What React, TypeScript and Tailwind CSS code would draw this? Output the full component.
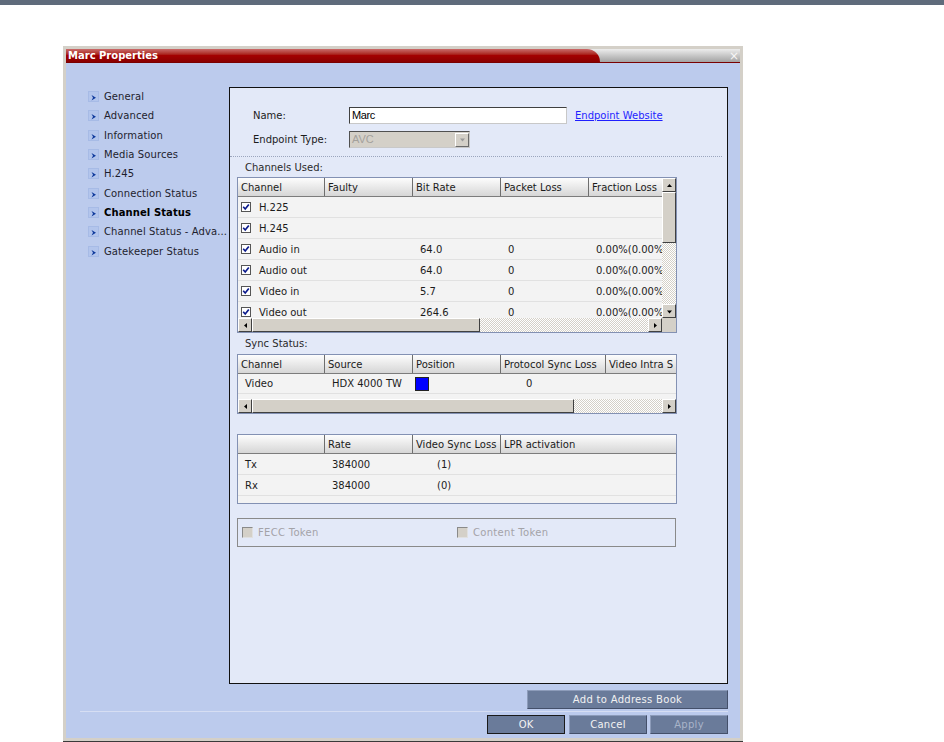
import React from "react";

type Dir = "up" | "down" | "left" | "right";

const arrows: Record<Dir, string> = {
  up: "M3.5 2 L6 5 L1 5Z",
  down: "M1 2.5 L6 2.5 L3.5 5.5Z",
  left: "M5 1 L5 6 L2 3.5Z",
  right: "M2 1 L2 6 L5 3.5Z",
};

function ScrollBtn({ dir }: { dir: Dir }) {
  return (
    <div className="flex h-[14px] w-[14px] shrink-0 items-center justify-center border border-t-white border-l-white border-r-[#404040] border-b-[#404040] bg-[#d4d0c8]">
      <svg width="7" height="7" viewBox="0 0 7 7">
        <path d={arrows[dir]} fill="#000" />
      </svg>
    </div>
  );
}

function Thumb({ className }: { className: string }) {
  return (
    <div
      className={`shrink-0 border border-t-white border-l-white border-r-[#404040] border-b-[#404040] bg-[#d4d0c8] ${className}`}
    />
  );
}

function Track({ className }: { className: string }) {
  return (
    <div
      className={`bg-[image:repeating-conic-gradient(#d4d0c8_0_25%,#ffffff_0_50%)] bg-[length:2px_2px] ${className}`}
    />
  );
}

function Checked() {
  return (
    <svg width="10" height="10" viewBox="0 0 10 10" className="shrink-0">
      <rect x="0.5" y="0.5" width="9" height="9" fill="#fff" stroke="#555" />
      <path d="M2.2 4.8 L4.2 7 L7.8 2.4" fill="none" stroke="#0b1a8c" strokeWidth="1.7" />
    </svg>
  );
}

function NavArrow() {
  return (
    <svg width="11" height="11" viewBox="0 0 11 11" className="shrink-0">
      <rect width="11" height="11" fill="#a7bbe6" />
      <rect x="1" y="1" width="9" height="9" fill="#b3c5ec" />
      <path d="M3.5 4 L8 6.8 L3.5 9.6 L5 6.8Z" fill="#0f3a9c" />
    </svg>
  );
}

function HeadCell({ w, children, last }: { w: string; children?: React.ReactNode; last?: boolean }) {
  return (
    <div
      className={`flex h-full shrink-0 items-center overflow-hidden whitespace-nowrap pl-[3px] ${w} ${
        last ? "" : "border-r border-[#6e6e6e]"
      }`}
    >
      {children}
    </div>
  );
}

function Header({ children }: { children: React.ReactNode }) {
  return (
    <div className="flex h-[19px] shrink-0 border-b border-[#7c7c7c] bg-linear-to-b from-[#fdfdfd] to-[#d6d6d6] text-[#1b1b1b]">
      {children}
    </div>
  );
}

const channels = [
  { name: "H.225", rate: "", loss: "", frac: "" },
  { name: "H.245", rate: "", loss: "", frac: "" },
  { name: "Audio in", rate: "64.0", loss: "0", frac: "0.00%(0.00%" },
  { name: "Audio out", rate: "64.0", loss: "0", frac: "0.00%(0.00%" },
  { name: "Video in", rate: "5.7", loss: "0", frac: "0.00%(0.00%" },
  { name: "Video out", rate: "264.6", loss: "0", frac: "0.00%(0.00%" },
];

const nav = [
  "General",
  "Advanced",
  "Information",
  "Media Sources",
  "H.245",
  "Connection Status",
  "Channel Status",
  "Channel Status - Adva...",
  "Gatekeeper Status",
];

export default function App() {
  return (
    <div className="h-[742px] w-[944px] overflow-hidden bg-white font-['DejaVu_Sans',sans-serif] text-[10px] text-[#1c1c1c]">
      <div className="h-[5px] bg-[#5f6b7b]" />

      <div className="ml-[63px] mt-[41px] flex h-[695px] w-[680px] flex-col border-[3px] border-[#d4d0c8] shadow-[0_1px_0_#3a3a3a]">
        {/* title bar */}
        <div className="flex h-[14px] shrink-0 items-stretch border-b border-[#7a0000] bg-linear-to-b from-[#ededed] to-[#a3a3a3]">
          <div className="flex w-[534px] items-center rounded-tr-[14px] bg-linear-to-b from-[#c96a6a] via-[#a30000] to-[#8a0000] pl-[2px] pt-[1px] text-[10px] font-bold leading-none text-white">
            Marc Properties
          </div>
          <div className="flex-1" />
          <span className="flex items-center pr-[1px] text-[12px] leading-none text-[#f6f6f6]">×</span>
        </div>

        {/* body */}
        <div className="flex flex-1 flex-col bg-[#bccbed] pt-[24px]">
          <div className="flex">
            <div className="flex w-[163px] shrink-0 flex-col pl-[22px]">
              {nav.map((n) => (
                <div key={n} className="flex h-[19.3px] items-center gap-[5px]">
                  <NavArrow />
                  <span
                    className={`whitespace-nowrap tracking-[0.1px] ${
                      n === "Channel Status" ? "font-bold text-black" : "text-[#1e1e2e]"
                    }`}
                  >
                    {n}
                  </span>
                </div>
              ))}
            </div>

            {/* content panel */}
            <div className="flex h-[597px] w-[499px] shrink-0 flex-col border border-[#111] bg-[#e3e9f8]">
              <div className="mt-[19px] flex h-[17px] items-center pl-[23px]">
                <span className="w-[96px] shrink-0">Name:</span>
                <div className="flex h-[17px] w-[218px] items-center border border-[#c8c8c8] border-t-[#404040] border-l-[#404040] bg-white pl-[2px] font-['Liberation_Sans',sans-serif] text-[11px] tracking-[-0.4px] text-black">
                  Marc
                </div>
                <span className="ml-[8px] text-[#1f1fff] underline">Endpoint Website</span>
              </div>
              <div className="mt-[7px] flex h-[17px] items-center pl-[23px]">
                <span className="w-[96px] shrink-0">Endpoint Type:</span>
                <div className="flex h-[17px] w-[121px] items-center justify-between border border-[#c8c8c8] border-t-[#505050] border-l-[#505050] bg-[#d4d0c8] pl-[2px] font-['Liberation_Sans',sans-serif] text-[11px] text-[#a4a19c]">
                  AVC
                  <div className="flex h-[14px] w-[14px] items-center justify-center border border-t-white border-l-white border-r-[#6a6a6a] border-b-[#6a6a6a] bg-[#d4d0c8]">
                    <svg width="7" height="7" viewBox="0 0 7 7">
                      <path d="M1 2.5 L6 2.5 L3.5 5.5Z" fill="#9a9a9a" />
                    </svg>
                  </div>
                </div>
              </div>

              <div className="mr-[5px] mt-[8px] border-t border-dotted border-[#9ba5bd]" />

              <div className="flex h-[20px] items-center pl-[15px] text-[#2a2a2a]">Channels Used:</div>

              {/* channels table */}
              <div className="ml-[7px] flex h-[156px] w-[440px] flex-col border border-[#8391b3] bg-[#f3f3f3]">
                <div className="flex h-[140px]">
                  <div className="flex w-[424px] flex-col overflow-hidden">
                    <Header>
                      <HeadCell w="w-[87px]">Channel</HeadCell>
                      <HeadCell w="w-[88px]">Faulty</HeadCell>
                      <HeadCell w="w-[88px]">Bit Rate</HeadCell>
                      <HeadCell w="w-[88px]">Packet Loss</HeadCell>
                      <HeadCell w="w-[73px]" last>
                        Fraction Loss
                      </HeadCell>
                    </Header>
                    {channels.map((c) => (
                      <div key={c.name} className="flex h-[21px] shrink-0 items-center border-b border-[#e1e1e1]">
                        <div className="flex w-[87px] shrink-0 items-center gap-[8px] pl-[3px]">
                          <Checked />
                          <span>{c.name}</span>
                        </div>
                        <div className="w-[88px] shrink-0" />
                        <div className="w-[88px] shrink-0 pl-[7px]">{c.rate}</div>
                        <div className="w-[88px] shrink-0 pl-[7px]">{c.loss}</div>
                        <div className="w-[73px] shrink-0 overflow-hidden whitespace-nowrap pl-[7px]">{c.frac}</div>
                      </div>
                    ))}
                  </div>
                  <div className="flex w-[14px] flex-col">
                    <ScrollBtn dir="up" />
                    <Thumb className="h-[51px] w-[14px]" />
                    <Track className="flex-1" />
                    <ScrollBtn dir="down" />
                  </div>
                </div>
                <div className="flex h-[14px]">
                  <ScrollBtn dir="left" />
                  <Thumb className="h-[14px] w-[228px]" />
                  <Track className="flex-1" />
                  <ScrollBtn dir="right" />
                  <div className="w-[14px] shrink-0 bg-[#d4d0c8]" />
                </div>
              </div>

              <div className="flex h-[21px] items-center pl-[15px] text-[#2a2a2a]">Sync Status:</div>

              {/* sync table */}
              <div className="ml-[7px] flex h-[60px] w-[440px] flex-col border border-[#8391b3] bg-[#f3f3f3]">
                <Header>
                  <HeadCell w="w-[87px]">Channel</HeadCell>
                  <HeadCell w="w-[88px]">Source</HeadCell>
                  <HeadCell w="w-[88px]">Position</HeadCell>
                  <HeadCell w="w-[105px]">Protocol Sync Loss</HeadCell>
                  <HeadCell w="w-[70px]" last>
                    Video Intra S
                  </HeadCell>
                </Header>
                <div className="flex h-[20px] shrink-0 items-center border-b border-[#e1e1e1]">
                  <div className="w-[87px] shrink-0 pl-[7px]">Video</div>
                  <div className="w-[88px] shrink-0 pl-[7px]">HDX 4000 TW</div>
                  <div className="flex w-[88px] shrink-0 pl-[2px]">
                    <div className="h-[14px] w-[14px] border border-[#222] bg-[#0000ff]" />
                  </div>
                  <div className="w-[105px] shrink-0 pl-[25px]">0</div>
                </div>
                <div className="flex-1" />
                <div className="flex h-[14px] shrink-0">
                  <ScrollBtn dir="left" />
                  <Thumb className="h-[14px] w-[322px]" />
                  <Track className="flex-1" />
                  <ScrollBtn dir="right" />
                </div>
              </div>

              {/* rate table */}
              <div className="ml-[7px] mt-[20px] flex h-[70px] w-[440px] flex-col border border-[#8391b3] bg-[#f3f3f3]">
                <Header>
                  <HeadCell w="w-[87px]" />
                  <HeadCell w="w-[88px]">Rate</HeadCell>
                  <HeadCell w="w-[88px]">Video Sync Loss</HeadCell>
                  <HeadCell w="w-[175px]" last>
                    LPR activation
                  </HeadCell>
                </Header>
                {[
                  ["Tx", "384000", "(1)"],
                  ["Rx", "384000", "(0)"],
                ].map(([a, b, c]) => (
                  <div key={a} className="flex h-[21px] shrink-0 items-center border-b border-[#e1e1e1]">
                    <div className="w-[87px] shrink-0 pl-[7px]">{a}</div>
                    <div className="w-[88px] shrink-0 pl-[7px]">{b}</div>
                    <div className="w-[88px] shrink-0 pl-[24px]">{c}</div>
                  </div>
                ))}
              </div>

              {/* tokens */}
              <div className="ml-[7px] mt-[14px] flex h-[29px] w-[439px] items-center border border-[#8a8a8a] text-[#a3a3a8]">
                <div className="flex w-[219px] items-center gap-[5px] pl-[4px]">
                  <div className="h-[11px] w-[11px] border border-[#8a8a8a] border-r-[#e0e0e0] border-b-[#e0e0e0] bg-[#d4d0c8]" />
                  <span className="tracking-[0.3px]">FECC Token</span>
                </div>
                <div className="flex items-center gap-[5px]">
                  <div className="h-[11px] w-[11px] border border-[#8a8a8a] border-r-[#e0e0e0] border-b-[#e0e0e0] bg-[#d4d0c8]" />
                  <span className="tracking-[0.3px]">Content Token</span>
                </div>
              </div>
            </div>
          </div>

          {/* footer */}
          <div className="mr-[12px] mt-[6px] flex justify-end">
            <button className="flex h-[19px] w-[201px] items-center justify-center border border-t-[#8d9cba] border-l-[#8d9cba] border-r-[#44506a] border-b-[#44506a] bg-[#6a7b9a] text-[10px] tracking-[0.3px] text-[#f2f2f2]">
              Add to Address Book
            </button>
          </div>
          <div className="ml-[14px] mr-[12px] mt-[2px] h-[1px] bg-[#d6def3]" />
          <div className="mr-[12px] mt-[3px] flex justify-end gap-[3px]">
            <button className="mr-[1px] flex h-[19px] w-[78px] items-center justify-center border border-[#1a1a1a] bg-[#6a7b9a] text-[10px] text-[#f2f2f2]">
              OK
            </button>
            <button className="flex h-[19px] w-[78px] items-center justify-center border border-t-[#8d9cba] border-l-[#8d9cba] border-r-[#44506a] border-b-[#44506a] bg-[#6a7b9a] text-[10px] tracking-[0.3px] text-[#f2f2f2]">
              Cancel
            </button>
            <button className="flex h-[19px] w-[78px] items-center justify-center border border-t-[#8d9cba] border-l-[#8d9cba] border-r-[#44506a] border-b-[#44506a] bg-[#6a7b9a] text-[10px] tracking-[0.3px] text-[#a9b4c9]">
              Apply
            </button>
          </div>
        </div>
      </div>
    </div>
  );
}
